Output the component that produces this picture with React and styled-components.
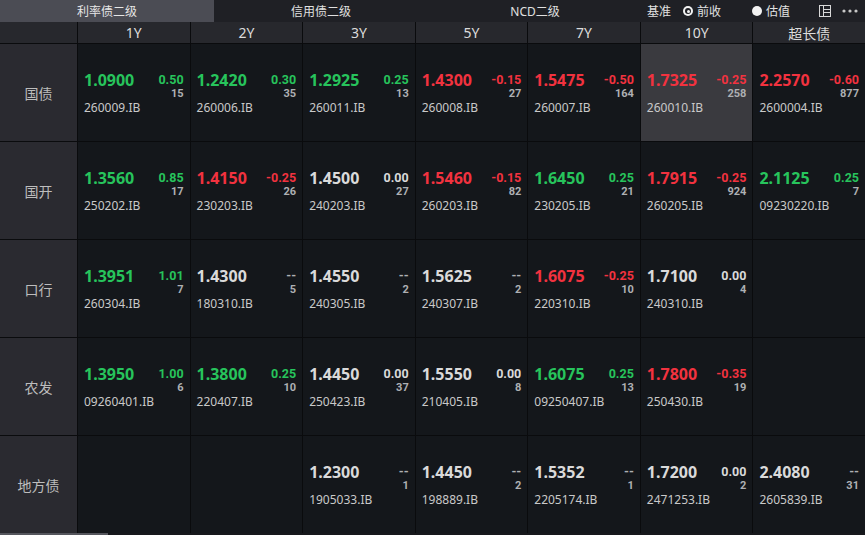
import React from "react";
import styled, { createGlobalStyle } from "styled-components";

const Global = createGlobalStyle`
  html, body { margin: 0; padding: 0; background: #14171b; }
  body { font-family: "Noto Sans", "Noto Sans CJK SC", sans-serif; }
  * { box-sizing: border-box; }
`;

const Page = styled.div`
  width: 865px;
  height: 535px;
  display: flex;
  flex-direction: column;
  background: #0a0b0d;
  overflow: hidden;
`;

const TopBar = styled.div`
  height: 22px;
  display: flex;
  align-items: stretch;
  background: #1f2025;
  color: #e2e2e2;
  font-size: 12px;
`;

const Tab = styled.div`
  width: 214px;
  display: flex;
  align-items: center;
  justify-content: center;
  background: ${(p) => (p.$active ? "#4b4c54" : "transparent")};
  color: ${(p) => (p.$active ? "#e6e6e6" : "#e0e0e0")};
`;

const Controls = styled.div`
  flex: 1;
  display: flex;
  align-items: center;
  padding-left: 5px;
  white-space: nowrap;
`;

const Label = styled.span`
  margin-right: 12px;
`;

const Radio = styled.span`
  display: inline-flex;
  align-items: center;
  gap: 4px;
  margin-right: ${(p) => p.$mr || 0}px;
`;

const RadioWrap = styled.span`
  position: relative;
  display: inline-flex;
  align-items: center;
  justify-content: center;
`;

const Dot = styled.span`
  width: 10px;
  height: 10px;
  border-radius: 50%;
  background: #f2f2f2;
  display: inline-flex;
  align-items: center;
  justify-content: center;
  &::after {
    content: "";
    width: ${(p) => (p.$checked ? 6 : 0)}px;
    height: ${(p) => (p.$checked ? 6 : 0)}px;
    border-radius: 50%;
    background: #1f2025;
  }
`;

const InnerDot = styled.span`
  width: 3px;
  height: 3px;
  border-radius: 50%;
  background: #f2f2f2;
  position: absolute;
`;

const Icons = styled.div`
  margin-left: auto;
  display: flex;
  align-items: center;
  gap: 11px;
  padding-right: 7px;
`;

const Grid = styled.div`
  flex: 1;
  display: grid;
  grid-template-columns: 77px repeat(7, 1fr);
  grid-template-rows: 21px repeat(5, 1fr);
  gap: 1px;
  background: #0a0b0d;
`;

const HeadCell = styled.div`
  background: #27282d;
  color: #dcdcdc;
  font-size: 14px;
  display: flex;
  align-items: center;
  justify-content: center;
`;

const RowLabel = styled.div`
  background: #2a2a30;
  color: #bdbdbd;
  font-size: 14px;
  display: flex;
  align-items: center;
  justify-content: center;
`;

const Cell = styled.div`
  background: ${(p) => (p.$hl ? "#3a3a3f" : "#14171b")};
  display: flex;
  flex-direction: column;
  justify-content: center;
  padding: 0 6px 0 6px;
`;

const TopLine = styled.div`
  display: flex;
  justify-content: space-between;
  align-items: flex-start;
`;

const Price = styled.div`
  font-size: 16px;
  font-weight: 700;
  line-height: 22px;
  color: ${(p) => p.$c};
`;

const Side = styled.div`
  display: flex;
  flex-direction: column;
  align-items: flex-end;
  margin-top: 4px;
  font-family: Roboto, "Noto Sans", sans-serif;
`;

const Change = styled.div`
  font-size: 12.5px;
  font-weight: 700;
  line-height: 14px;
  color: ${(p) => p.$c};
`;

const Volume = styled.div`
  font-size: 11px;
  font-weight: 700;
  line-height: 13px;
  color: #aeb0b3;
`;

const Code = styled.div`
  font-size: 12px;
  line-height: 16px;
  color: #c9c9c9;
`;

const ScrollTrack = styled.div`
  height: 2px;
  background: #17181c;
  display: flex;
`;

const ScrollThumb = styled.div`
  width: 108px;
  background: #55565d;
`;

const GREEN = "#27c45c";
const RED = "#f2323f";
const WHITE = "#dadada";
const GRAY = "#aeb0b3";

const colorOf = (ch) => {
  if (ch === "--") return GRAY;
  const v = parseFloat(ch);
  if (v > 0) return GREEN;
  if (v < 0) return RED;
  return WHITE;
};

const priceColor = (ch) => {
  if (ch === "--") return WHITE;
  const v = parseFloat(ch);
  if (v > 0) return GREEN;
  if (v < 0) return RED;
  return WHITE;
};

const cols = ["1Y", "2Y", "3Y", "5Y", "7Y", "10Y", "超长债"];

const rows = [
  {
    name: "国债",
    cells: [
      ["1.0900", "0.50", "15", "260009.IB"],
      ["1.2420", "0.30", "35", "260006.IB"],
      ["1.2925", "0.25", "13", "260011.IB"],
      ["1.4300", "-0.15", "27", "260008.IB"],
      ["1.5475", "-0.50", "164", "260007.IB"],
      ["1.7325", "-0.25", "258", "260010.IB", true],
      ["2.2570", "-0.60", "877", "2600004.IB"],
    ],
  },
  {
    name: "国开",
    cells: [
      ["1.3560", "0.85", "17", "250202.IB"],
      ["1.4150", "-0.25", "26", "230203.IB"],
      ["1.4500", "0.00", "27", "240203.IB"],
      ["1.5460", "-0.15", "82", "260203.IB"],
      ["1.6450", "0.25", "21", "230205.IB"],
      ["1.7915", "-0.25", "924", "260205.IB"],
      ["2.1125", "0.25", "7", "09230220.IB"],
    ],
  },
  {
    name: "口行",
    cells: [
      ["1.3951", "1.01", "7", "260304.IB"],
      ["1.4300", "--", "5", "180310.IB"],
      ["1.4550", "--", "2", "240305.IB"],
      ["1.5625", "--", "2", "240307.IB"],
      ["1.6075", "-0.25", "10", "220310.IB"],
      ["1.7100", "0.00", "4", "240310.IB"],
      null,
    ],
  },
  {
    name: "农发",
    cells: [
      ["1.3950", "1.00", "6", "09260401.IB"],
      ["1.3800", "0.25", "10", "220407.IB"],
      ["1.4450", "0.00", "37", "250423.IB"],
      ["1.5550", "0.00", "8", "210405.IB"],
      ["1.6075", "0.25", "13", "09250407.IB"],
      ["1.7800", "-0.35", "19", "250430.IB"],
      null,
    ],
  },
  {
    name: "地方债",
    cells: [
      null,
      null,
      ["1.2300", "--", "1", "1905033.IB"],
      ["1.4450", "--", "2", "198889.IB"],
      ["1.5352", "--", "1", "2205174.IB"],
      ["1.7200", "0.00", "2", "2471253.IB"],
      ["2.4080", "--", "31", "2605839.IB"],
    ],
  },
];

const LayoutIcon = () => (
  <svg width="12" height="12" viewBox="0 0 12 12" fill="none" stroke="#d8d8d8" strokeWidth="1">
    <rect x="0.5" y="0.5" width="11" height="11" />
    <line x1="4.5" y1="0.5" x2="4.5" y2="11.5" />
    <line x1="4.5" y1="4.5" x2="11.5" y2="4.5" />
    <line x1="4.5" y1="7.5" x2="11.5" y2="7.5" />
  </svg>
);

const MoreIcon = () => (
  <svg width="16" height="4" viewBox="0 0 16 4" fill="#c8c8c8">
    <circle cx="2" cy="2" r="1.6" />
    <circle cx="8" cy="2" r="1.6" />
    <circle cx="14" cy="2" r="1.6" />
  </svg>
);

const DataCell = ({ d }) => {
  if (!d) return <Cell />;
  const [price, ch, vol, code, hl] = d;
  return (
    <Cell $hl={hl}>
      <TopLine>
        <Price $c={priceColor(ch)}>{price}</Price>
        <Side>
          <Change $c={colorOf(ch)}>{ch}</Change>
          <Volume>{vol}</Volume>
        </Side>
      </TopLine>
      <Code>{code}</Code>
    </Cell>
  );
};

export default function App() {
  return (
    <>
      <Global />
      <Page>
        <TopBar>
          <Tab $active>利率债二级</Tab>
          <Tab>信用债二级</Tab>
          <Tab>NCD二级</Tab>
          <Controls>
            <Label>基准</Label>
            <Radio $mr={31}>
              <RadioWrap>
                <Dot $checked />
                <InnerDot />
              </RadioWrap>
              前收
            </Radio>
            <Radio>
              <Dot />
              估值
            </Radio>
            <Icons>
              <LayoutIcon />
              <MoreIcon />
            </Icons>
          </Controls>
        </TopBar>
        <Grid>
          <HeadCell />
          {cols.map((c) => (
            <HeadCell key={c}>{c}</HeadCell>
          ))}
          {rows.map((r) => (
            <React.Fragment key={r.name}>
              <RowLabel>{r.name}</RowLabel>
              {r.cells.map((d, i) => (
                <DataCell key={i} d={d} />
              ))}
            </React.Fragment>
          ))}
        </Grid>
        <ScrollTrack>
          <ScrollThumb />
        </ScrollTrack>
      </Page>
    </>
  );
}
